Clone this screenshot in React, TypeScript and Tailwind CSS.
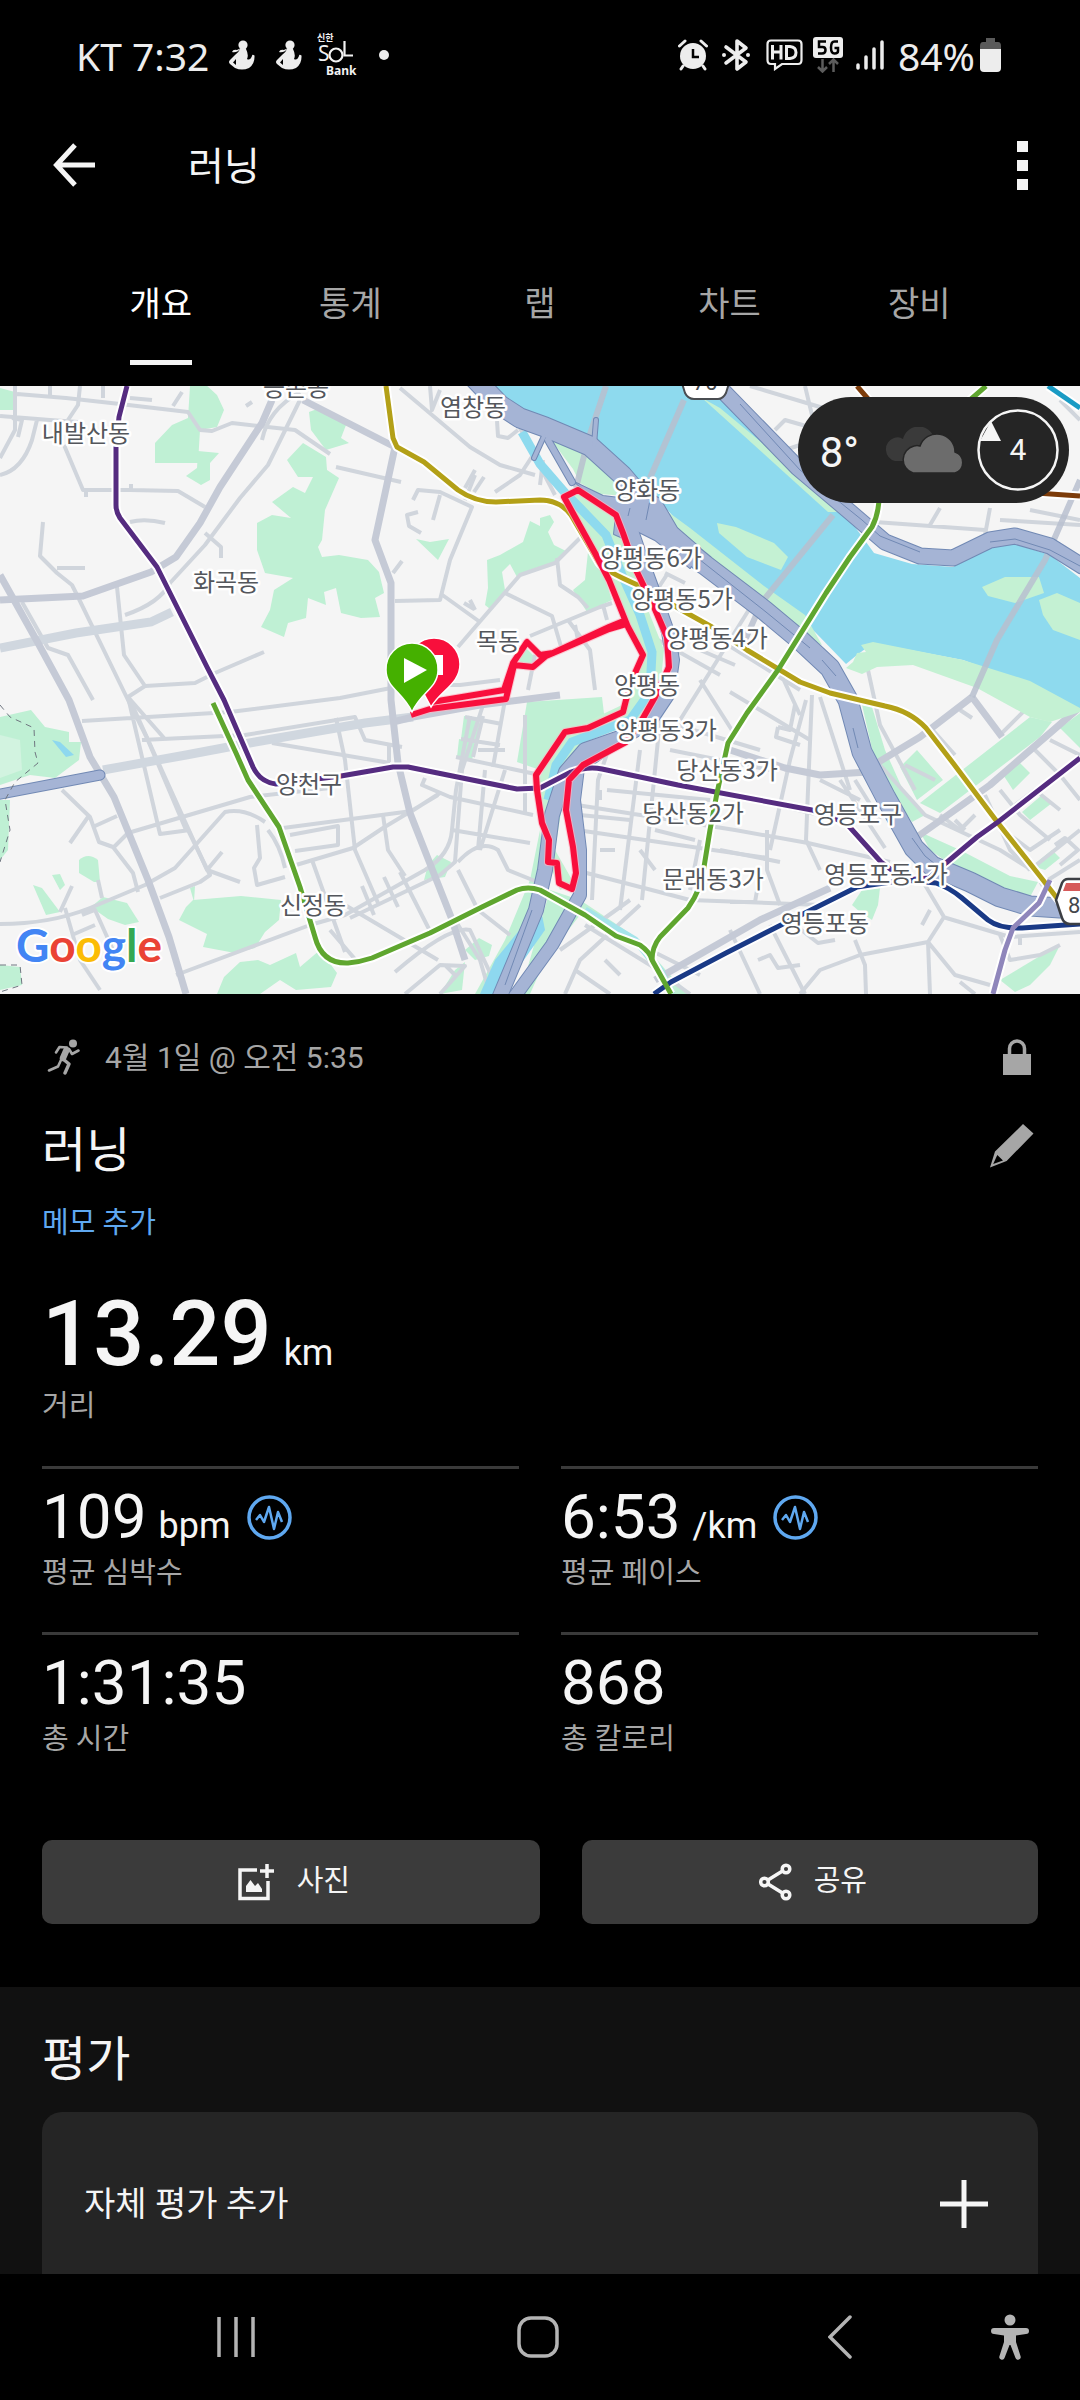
import type { ReactNode } from "react";

const MINOR_ROADS = [
  "M0 416 L50 420 L78 422 M15 386 L15 430 L0 458 M0 475 Q22 470 32 440 L37 420 M17 394 L66 398 L120 404 L188 412 L200 430 L212 431 L232 423 L295 430 L330 454",
  "M50 386 V396 M80 386 L78 405 L68 420 M103 386 V398 M12 418 L22 420 L18 437 M64 445 L83 490 H130 L178 491 L205 507 M86 490 V497 M131 484 V492 M130 398 L152 400 M182 392 L173 406 M252 402 L246 406",
  "M43 522 L40 556 L57 573 L72 585 L78 597 L128 700 L147 738 L186 830 M57 568 H85 M130 522 Q145 518 165 523 M117 587 L124 655 L145 686 L128 697 L164 738 M22 602 L48 648 L68 655 L93 700",
  "M145 686 L195 683 L215 673 L264 652 M125 615 Q160 603 170 583 L205 545 L240 498 L268 465 L300 400 M205 533 L221 547 V558 M262 440 Q268 410 300 392",
  "M82 721 L230 712 L340 698 L391 688 M142 740 L245 735 L355 717 L365 740 L402 747 M128 697 L160 834 L190 830 M130 700 L207 870 L240 882 M207 870 L222 852",
  "M62 790 L90 817 L99 842 L113 847 L133 873 L138 892 M88 817 L70 843 M95 826 L117 816 M114 847 L128 833 L250 797 L330 788 M188 830 L210 875 L200 882 L160 898",
  "M0 924 Q50 924 90 908 L145 885 L175 868 L225 812 Q245 808 265 822 M60 912 L72 886 M65 908 L80 960 L100 990 M82 915 L95 910 L113 950 M72 935 L95 925 M98 880 L102 898",
  "M176 975 L310 925 L345 915 L425 870 Q450 855 452 830 L456 790 L470 716 M283 828 L412 811 L440 793 M290 835 L338 826 V845 L295 851 M296 865 L353 848 L383 828 L438 795",
  "M336 718 L345 760 L355 850 L378 903 M257 825 L260 858 L254 868 L257 885 L285 877 M268 830 Q280 845 285 868 M312 860 L345 952 M383 815 L388 850 L405 876 M350 918 L440 875 L455 862 L462 770 L483 705",
  "M272 743 L390 763 M389 745 V762 M345 905 L438 960 M330 930 L360 965 M395 972 Q450 925 470 930 L500 994 M384 877 L398 907 M400 872 L432 935 M362 886 L374 915 M455 920 L480 960 L490 994",
  "M405 994 L440 965 L465 966 L440 994 M445 965 L455 975 M458 870 L478 910 L510 935 M458 862 Q480 838 498 850 L508 870 L540 883 M425 778 L422 785 L450 797 L533 815 M525 715 V815",
  "M456 757 L540 775 M461 739 L500 745 M465 717 L502 724 M483 716 L473 757 M505 700 L493 767 M478 750 L505 750 M485 770 L478 850 M505 770 L480 850 M452 830 L530 843",
  "M336 467 L401 482 M413 500 L418 490 L440 492 L472 507 L450 560 L440 600 L395 601 M440 495 L433 520 M475 475 L465 500 M484 477 L474 492 M418 512 L407 515 L409 526 L421 533 M402 561 L393 573",
  "M441 594 L480 622 M580 538 L555 563 L520 575 L470 633 L458 647 M464 603 L474 609 M505 593 L552 616 L562 650 M391 685 L460 685 L500 680 M470 600 L475 610 M497 421 L498 436 L508 438 L518 430",
  "M400 388 L470 447 L500 465 L535 475 M430 386 L432 410 L440 390 M495 492 L520 475 L533 455 M540 485 L543 460 M520 428 L555 495 M475 470 L465 488 M557 558 L560 585 L578 597 L588 608",
  "M530 636 L600 607 L612 603 M568 620 L590 650 L595 690 M603 605 L607 620 M535 655 L528 690 M575 625 L578 640 M640 630 L720 675",
  "M665 573 L685 583 M657 590 L668 573 M700 650 L735 665 M755 600 L680 720 M700 680 L735 735 M720 640 L800 690 M660 720 L760 750 M730 692 L810 740 M780 672 L800 715",
  "M806 700 L790 760 L770 850 M812 695 L808 790 L806 840 L820 870 M820 697 L850 790 M778 727 L790 730 L795 705 M778 727 L776 737 L800 745 M820 780 L860 800 M840 780 L885 848 M855 780 L880 820",
  "M670 750 L770 770 M665 780 L820 815 M610 745 L598 780 L592 900 M640 750 L620 910 M660 720 L642 900 M577 805 L735 830 L808 843 L890 862 M577 830 L768 858 M575 870 L690 900 L820 905",
  "M600 790 V800 M607 790 L710 800 M580 815 L630 820 M655 830 L695 840 M600 850 L615 850 M640 850 L655 870 M700 840 L690 890 M720 850 L780 862 M767 830 V870 L780 905 M730 902 H755 L758 885",
  "M585 925 L650 965 L690 994 M560 950 L630 900 M565 994 L580 960 L640 905 M575 970 L610 994 M620 975 L605 960 M730 930 L760 994 M770 925 L805 994 M650 950 L700 975 M795 925 L818 943 L835 940",
  "M758 960 L770 955 L778 968 L800 965 M800 994 L820 970 L860 955 L928 942 L944 917 L925 885 M855 940 L865 965 L866 994 M928 942 L930 994 M922 925 L930 910 M928 942 L955 975 L990 985 M1000 935 L1010 960 L1040 955 L1060 945 M943 917 L1010 937 L1080 932 M975 994 L960 982 M1020 935 V945",
  "M873 763 L880 765 L925 815 L1000 850 L1035 872 M868 670 L880 725 L915 790 M905 765 L935 780 M930 727 L955 755 M960 710 L972 718 M1000 735 L1030 705 M940 815 L960 830 L975 815 M955 820 L965 830 M985 795 L1010 850 L1030 870",
  "M1010 835 L1030 850 L1060 830 M1000 790 L1020 815 L1050 840 M1015 805 L1035 790 L1060 810 M1035 750 L1060 775 L1080 800 M1050 740 L1080 755 M1030 870 L1080 830 M1040 885 L1080 860 M1055 845 L1065 838 L1078 850 L1060 865",
  "M740 400 L785 450 L800 445 M775 430 L785 420 L820 430 M750 386 L830 410 M805 386 L818 440 M875 522 L985 530 M940 508 L930 525 M990 508 L985 535 M1000 520 L1080 525 M1030 510 L1080 520 M1060 400 L1080 420",
];

const MAJOR_ROADS = [
  "M0 600 L83 596 L151 572 L176 557 L200 523 L220 487 L262 423 L272 400 M303 400 L395 447 L375 540 L391 583 L391 700 L398 763 L410 813 L451 917 L465 960",
  "M0 575 L14 600 L38 643 L69 700 L90 757 L114 797 L148 880 L169 937 L186 994",
  "M393 722 L413 717 L480 705 L560 695",
  "M730 750 L785 768 L820 775 L868 772 M655 980 L760 920 L830 888",
  "M877 763 L920 737 L972 697 M972 697 L1002 737 M917 837 L990 785 L1080 707",
];

const LIGHT_ROADS = [
  "M0 648 L76 633 L151 622 L172 612",
  "M103 770 L186 755 L255 742 L365 723 L413 717",
];

const PARKS = [
  "M0 388 L15 392 V410 H0Z",
  "M190 386 L205 384 L217 395 L224 410 L217 427 L200 430 L198 463 H155 V443 L172 425 L188 418Z",
  "M198 451 L219 453 L210 463 V480 L201 485 L186 476 L197 468Z",
  "M309 412 L320 408 L346 425 L341 438 L349 443 L326 450 L311 430Z",
  "M303 443 L326 457 L327 470 L339 478 L325 510 L322 540 L318 547 L322 557 L339 555 L368 560 L379 572 L384 593 L375 598 L380 617 L361 618 L341 613 L336 588 L324 592 L326 605 L308 598 L306 618 L288 623 L284 637 L261 627 L270 610 L274 590 L293 578 L265 573 L257 550 V523 L272 515 L291 518 L272 502 L293 487 L305 493 L313 477 L298 477 L287 460Z",
  "M416 539 L430 542 L449 539 L438 560Z",
  "M530 521 L540 526 L540 518 L550 515 L554 522 L548 532 L554 545 L566 551 L560 560 L530 570 L517 577 L510 564 L502 572 L505 590 L490 609 L485 605 L488 588 L487 560 L500 555 L523 542Z",
  "M588 552 L598 558 L612 600 L587 612 L573 590 L585 580Z",
  "M0 717 L31 710 L45 727 L69 732 V742 L81 742 L79 760 L55 778 L30 775 L0 785Z",
  "M0 800 L10 800 L8 850 L0 860Z",
  "M79 860 Q88 852 98 860 L100 882 H94 L79 873Z",
  "M103 897 L127 903 L139 922 L125 925 L108 919 L91 907Z",
  "M33 885 L42 888 L60 912 L46 915Z M52 875 L60 874 L65 885 L60 890Z",
  "M193 900 L241 896 L281 900 L279 920 L265 932 L255 948 L235 953 L203 947 L207 934 L179 920 L186 907Z M190 888 L195 886 L194 902Z",
  "M217 994 L224 977 L240 962 L258 960 L270 965 L296 953 L300 967 L320 950 L337 973 L331 987 L296 990 L280 980 L260 994Z",
  "M464 716 L480 718 L477 741 L461 739Z M459 739 L475 742 L472 761 L457 757Z",
  "M527 702 L602 697 L605 722 L565 735 L540 770 L517 762Z",
  "M437 855 L451 862 L445 877 L424 880 L428 865Z",
  "M479 938 L492 945 L489 956 L475 960 L465 950Z",
  "M455 970 L465 962 L462 990 L440 994Z",
  "M540 830 L545 870 L540 905 L510 950 L490 994 H475 L505 940 L530 880Z",
  "M516 660 L526 648 L536 658 L530 666Z",
  "M0 965 L20 967 L22 985 L0 990Z",
  "M862 705 L872 707 L885 750 L903 790 L925 815 L912 822 L893 793 L873 753Z",
  "M920 832 L960 850 L1010 876 L1038 882 L1030 897 L1007 892 L957 869 L930 850Z",
  "M900 767 L917 750 L943 780 L917 800Z M920 803 L1030 717 L1052 722 L1040 737 L940 813Z",
  "M1002 773 L1020 763 L1030 773 L1013 790Z M1022 812 L1042 795 L1052 803 L1030 820Z M1032 866 L1052 850 L1060 858 L1045 870Z M1060 728 L1080 713 V748Z",
  "M1000 980 L1020 968 L1050 950 L1060 945 L1050 965 L1030 985 L1015 992Z",
  "M852 905 L862 890 L880 888 L878 905 L872 920 L860 912Z",
  "M550 890 L580 900 L640 940 L670 975 L690 994 H670 L640 950 L580 915 L545 960 L530 994 H520Z",
];

const HIGHWAYS = [
  { d: "M476 380 L500 405 L520 418 L545 427 L590 446 L622 475 L650 508 L672 538 L705 565 L764 610 L800 640 L830 668 L848 700 L862 752 L886 798 L914 848 L932 866 L970 882 L1000 897 L1030 906 L1060 908", w: 19 },
  { d: "M548 440 L572 482", w: 6 },
  { d: "M596 420 L594 445 M544 436 L534 458", w: 4 },
  { d: "M630 525 L642 560 L656 598 L668 632 L673 660 L668 695 L650 722 L600 752 L578 768 L574 800 L580 850 L580 895 L552 945 L515 996", w: 12 },
  { d: "M628 735 L585 750 L566 772 L552 815 L545 870 L536 910 L500 996", w: 14 },
  { d: "M722 390 L798 468 L850 512 L885 542 L920 556 L953 558 L990 540 L1015 536 L1050 546 L1082 566", w: 15 },
  { d: "M-5 795 L100 775", w: 9 },
];

const JUNCTION =
  "M576 483 L603 496 L628 499 L640 488 L660 499 L677 528 L700 548 L690 568 L655 540 L635 530 L632 542 L614 534 L616 516 L600 503Z";

const ROUTE =
  "M578 490 L564 497 L595 553 L609 580 L628 627 L643 655 L635 673 L626 700 L623 712 L588 728 L565 732 L536 775 L537 790 L542 823 L549 840 L548 862 L557 863 L559 883 L572 889 L576 873 L573 847 L566 810 L569 780 L583 765 L626 742 L643 718 L655 697 L669 667 L667 637 L654 607 L636 570 L623 533 L616 515 Z M626 620 L609 627 L553 653 L540 655 L527 642 L513 663 L504 690 L432 702 M626 624 L609 629 L546 656 L533 667 L514 665 L506 699 L430 709 L411 715";

const TRANSIT = [
  { d: "M857 386 L869 400 L900 440 M1000 490 L1036 493 L1080 496", c: "#7d3c0a" },
  { d: "M1048 386 L1080 408", c: "#1a9bc4" },
  { d: "M386 386 L393 438 L397 447 L424 462 L458 490 Q475 502 496 502 L540 500 Q560 500 571 515 L599 563 Q603 570 640 586 L685 612 L712 627 L747 650 L800 682 L830 693 L885 706 Q910 711 926 728 L953 763 L998 823 L1043 880 L1060 902", c: "#b3a017" },
  { d: "M127 386 L119 417 L116 447 V505 Q116 512 120 518 L157 567 L172 597 L207 667 L224 700 L253 767 Q260 782 276 784 L341 776 L393 767 H408 L517 789 L540 788 L571 772 Q588 766 602 769 L678 785 L812 810 L846 823 L881 862 L905 880 L929 878 L946 863 L977 837 L998 822 L1080 758", c: "#552c80" },
  { d: "M654 994 L671 982 L726 953 L781 925 L857 887 L905 880 L936 883 Q950 888 962 898 L988 920 Q1000 929 1022 928 L1080 924", c: "#1a3a86" },
  { d: "M1050 880 L1039 903 L1013 928 L1005 950 L993 994", c: "#8f86bb" },
  { d: "M213 703 L236 753 L248 780 L279 827 L300 887 L315 937 Q322 964 348 963 Q360 962 372 958 L430 933 L482 907 L517 890 Q528 886 540 890 L585 915 L616 936 L640 945 Q650 952 652 960 L671 994", c: "#5fa62f" },
  { d: "M986 386 L970 400 L879 490 Q880 512 872 527 L850 557 L826 593 L778 670 L747 713 L728 743 L717 793 L710 830 L704 867 Q702 888 688 908 L660 937 Q652 947 652 960", c: "#5fa62f" },
];

const LABELS: [string, number, number][] = [
  ["내발산동", 86, 433],
  ["등촌동", 296, 387],
  ["염창동", 473, 407],
  ["화곡동", 226, 582],
  ["목동", 498, 641],
  ["양화동", 647, 490],
  ["양평동6가", 651, 558],
  ["양평동5가", 682, 599],
  ["양평동4가", 717, 638],
  ["양평동", 647, 685],
  ["양평동3가", 666, 730],
  ["당산동3가", 727, 770],
  ["당산동2가", 693, 813],
  ["영등포구", 858, 814],
  ["영등포동1가", 886, 874],
  ["문래동3가", 713, 879],
  ["영등포동", 825, 923],
  ["양천구", 309, 784],
  ["신정동", 313, 905],
];

function RouteMap() {
  return (
    <svg viewBox="0 386 1080 608" className="block w-full" role="img" aria-label="러닝 경로 지도">
      <rect x="0" y="386" width="1080" height="608" fill="#f5f5f5" />
      <g fill="#bff0d4">
        {PARKS.map((d) => (
          <path key={d} d={d} />
        ))}
      </g>
      <path d="M0 735 L20 740 L22 770 L0 778Z" fill="#d2f3e0" />
      <g fill="none" stroke="#d0d5dc" strokeWidth="4" strokeLinejoin="round">
        {MINOR_ROADS.map((d) => (
          <path key={d} d={d} />
        ))}
      </g>
      <g fill="none" stroke="#d0d7df" strokeWidth="9">
        {LIGHT_ROADS.map((d) => (
          <path key={d} d={d} />
        ))}
      </g>
      <g fill="none" stroke="#c5cad6" strokeWidth="7" strokeLinejoin="round">
        {MAJOR_ROADS.map((d) => (
          <path key={d} d={d} />
        ))}
      </g>

      <path
        d="M490 386 L513 408 L540 418 L590 440 L627 474 L662 504 L690 535 L764 595 L815 632 L846 664 L857 655 L873 643 L963 660 L1030 685 L1080 712 V578 L1050 555 L1015 544 L990 548 L953 567 L912 564 L874 553 L850 520 L798 478 L722 396 L712 386Z"
        fill="#8edaee"
      />
      <path d="M52 740 L60 742 L74 755 L66 757Z" fill="#8ed8ef" />
      <g fill="#c4f1d3">
        <path d="M702 398 L720 408 L845 512 L828 512Z" />
        <path d="M552 441 L587 453 L613 473 L625 496 L600 494 L580 483 L573 469Z" />
        <path d="M532 416 L540 414 L544 422 L534 422Z" />
        <path d="M660 506 L690 528 L764 586 L805 615 L822 645 L800 636 L690 550Z" />
        <path d="M717 523 L736 527 L774 543 L788 557 L781 570 L747 557 L719 533Z" />
        <path d="M982 587 L1005 577 L1039 577 L1044 593 L1015 603 L988 596Z" />
        <path d="M1039 600 L1057 593 L1080 603 V640 L1053 630 L1043 615Z" />
        <path d="M853 662 L857 653 L866 652 L861 645 L873 642 L963 660 L1030 681 L1080 708 V712 L1050 722 L1030 717 L977 688 L913 665 L877 667 L862 674 L846 668Z" />
        <path d="M578 491 L612 512 L622 540 L640 590 L664 650 L660 690 L640 720 L590 740 L568 770 L555 850 L575 885 L560 890 L548 860 L538 780 L565 732 L622 705 L640 655 L600 560 L566 500Z" />
      </g>
      <g fill="none" stroke="#b9c0cf" strokeWidth="6" opacity=".85">
        <path d="M606 386 L588 440 L576 488" />
        <path d="M684 400 L650 478" />
        <path d="M833 515 L762 602 L745 640" />
        <path d="M1080 480 L1045 560 L997 640 L972 697" />
      </g>
      <path d="M522 432 L540 464 L566 494 L580 508 L606 535 L622 575 L640 615 L652 652 L650 692 L630 720 L572 742 L556 765 L548 800" fill="none" stroke="#8edaee" strokeWidth="9" />
      <path d="M585 910 L635 940 L660 970 L672 994" fill="none" stroke="#a5e4ea" strokeWidth="7" />
      <path d="M540 905 L495 960 L480 994 H500 L545 930Z" fill="#8ed8ef" />

      <g fill="none" strokeLinejoin="round" strokeLinecap="round">
        {HIGHWAYS.map((h) => (
          <path key={h.d} d={h.d} stroke="#7189b4" strokeWidth={h.w + 2} />
        ))}
        <path d={JUNCTION} stroke="#7189b4" strokeWidth="2" />
        {HIGHWAYS.map((h) => (
          <path key={h.d} d={h.d} stroke="#a5b4d5" strokeWidth={h.w} />
        ))}
      </g>
      <path d={JUNCTION} fill="#a5b4d5" />
      <g fill="none" stroke="#7189b4" strokeWidth="1">
        <path d="M650 500 L646 520 M630 508 L628 516" />
        <path d="M690 552 L766 612 L810 648" />
        <path d="M822 660 L836 676 M853 728 L858 748 M912 838 L925 856 L940 868" />
        <path d="M740 404 L800 470 L862 520 L880 536 L920 552" />
        <path d="M990 542 L1015 539 L1050 550 L1080 566" />
        <path d="M532 910 L505 985" />
      </g>
      <g fill="none" stroke="#6f7680" strokeWidth="1" strokeDasharray="6 5">
        <path d="M0 705 L10 717 L34 728 L35 752 L38 763 L15 782 L5 800 L10 830 L0 862" />
        <path d="M0 965 L20 965 L22 985 L0 992" />
      </g>

      <g fill="none" stroke="#ffffff" strokeWidth="9" strokeLinejoin="round">
        {TRANSIT.map((t) => (
          <path key={t.d} d={t.d} />
        ))}
      </g>
      <g fill="none" strokeWidth="5" strokeLinejoin="round">
        {TRANSIT.map((t) => (
          <path key={t.d} d={t.d} stroke={t.c} />
        ))}
      </g>

      <path d={ROUTE} fill="none" stroke="#ffb3c2" strokeWidth="8" strokeLinejoin="round" opacity=".7" />
      <path d={ROUTE} fill="none" stroke="#f80f3c" strokeWidth="6" strokeLinejoin="round" />

      <path d="M681 380 L685 393 Q688 399 694 399 H718 Q723 399 726 393 L730 380Z" fill="#fff" stroke="#4a4d52" strokeWidth="2" />
      <path d="M1090 879 H1068 Q1064 879 1062 883 L1056 900 L1062 918 Q1064 924 1070 924 H1090Z" fill="#fff" stroke="#3c3f44" strokeWidth="2.5" />
      <path d="M1066 883 H1082 V891 H1063Z" fill="#d65a5a" />

      <g
        className="font-['Noto_Sans_CJK_KR',sans-serif]"
        fontSize="24"
        fill="#54575c"
        stroke="#ffffff"
        strokeWidth="5"
        strokeLinejoin="round"
        paintOrder="stroke"
        textAnchor="middle"
      >
        {LABELS.map(([name, x, y]) => (
          <text key={name} x={x} y={y + 9}>
            {name}
          </text>
        ))}
      </g>
      <g className="font-['Roboto',sans-serif]" fontSize="22" fill="#44474c">
        <text x="693" y="390">70</text>
        <text x="1068" y="913">8</text>
      </g>

      <path d="M434 638 a26 26 0 0 1 26 26 C460 684 441 690 431 707 L408 664 a26 26 0 0 1 26 -26Z" fill="#f80f3c" stroke="#fff" strokeWidth="1.5" />
      <rect x="427" y="655" width="16" height="20" fill="#fff" />
      <path d="M412 643 a26 26 0 0 1 26 27 C438 688 421 692 412 712 C403 692 386 688 386 670 a26 26 0 0 1 26 -27Z" fill="#45b000" stroke="#fff" strokeWidth="1.5" />
      <path d="M404 658 L427 670 L404 683Z" fill="#fff" />

      <text
        x="16"
        y="962"
        className="font-['Lato',sans-serif]"
        fontSize="46"
        fontWeight="700"
        stroke="#ffffff"
        strokeWidth="4"
        strokeLinejoin="round"
        paintOrder="stroke"
      >
        <tspan fill="#4285f4">G</tspan>
        <tspan fill="#ea4335">o</tspan>
        <tspan fill="#fbbc05">o</tspan>
        <tspan fill="#4285f4">g</tspan>
        <tspan fill="#34a853">l</tspan>
        <tspan fill="#ea4335">e</tspan>
      </text>
    </svg>
  );
}

function WeatherBadge() {
  return (
    <div className="absolute top-[11px] right-[11px] flex h-[106px] items-center gap-[24px] rounded-full bg-[#252525] pr-[10px] pl-[22px]">
      <span className="mt-[6px] text-[42px] leading-none">8°</span>
      <svg width="82" height="46" viewBox="0 0 82 46" aria-hidden="true">
        <path d="M12 34 a12 12 0 0 1 -1 -23 a9 9 0 0 1 9 1 a16 16 0 0 1 31 -1 L30 34Z" fill="#3a3a3a" />
        <path
          d="M30 46 a14 14 0 0 1 1 -27 q3 -1 6 0 a18 18 0 0 1 35 6 a11 11 0 0 1 0 21Z"
          fill="#6c6c6c"
          stroke="#252525"
          strokeWidth="1.5"
        />
      </svg>
      <div className="relative -ml-[12px] flex size-[82px] items-center justify-center">
        <svg className="absolute inset-0" width="82" height="82" viewBox="0 0 82 82" aria-hidden="true">
          <circle cx="41" cy="41" r="39.5" fill="none" stroke="#f5f5f5" strokeWidth="2.5" />
          <path d="M14 12 L24 32 H3Z" fill="#f5f5f5" />
        </svg>
        <span className="text-[30px] leading-none">4</span>
      </div>
    </div>
  );
}

function WomanIcon() {
  return (
    <svg width="26" height="30" viewBox="0 0 26 30" fill="#ededed" aria-hidden="true">
      <circle cx="14" cy="5" r="4.6" />
      <path d="M12 8 L8 10 Q4 9 3 12 Q8 13 11 9Z" />
      <path d="M11 9 H17 Q20 15 18 19 Q21 21 23 16 Q23 14 25.500 15.500 Q26 24 20 28 Q13 31 6 28 L1 24 Q-1 22 1 20 L6 15 Q10 12 11 9Z" />
      <path d="M7 19 L4 22.500 L7 25Z" fill="#000" />
    </svg>
  );
}

function SolBankIcon() {
  return (
    <svg width="42" height="46" viewBox="0 0 42 46" fill="#f2f2f2" aria-hidden="true">
      <text x="0" y="9" fontSize="9" fontWeight="700" className="font-['Noto_Sans_CJK_KR',sans-serif]">
        신한
      </text>
      <text x="1" y="29" fontSize="21" className="font-['Noto_Sans',sans-serif]">
        S
      </text>
      <circle cx="19" cy="23" r="6.500" fill="none" stroke="#f2f2f2" strokeWidth="2.200" />
      <path d="M27.500 9 V23.500 H36" fill="none" stroke="#f2f2f2" strokeWidth="2.200" />
      <text x="9" y="43" fontSize="12" fontWeight="700" className="font-['Noto_Sans',sans-serif]">
        Bank
      </text>
    </svg>
  );
}

function StatusBar() {
  return (
    <div className="flex h-[110px] items-center pr-[79px] pl-[76px] font-['Noto_Sans','Noto_Sans_CJK_KR',sans-serif] text-[39px] leading-none text-[#ededed]">
      <span>KT 7:32</span>
      <div className="ml-[20px] flex items-center gap-[21px]">
        <WomanIcon />
        <WomanIcon />
      </div>
      <div className="ml-[15px]">
        <SolBankIcon />
      </div>
      <span className="ml-[20px] size-[10px] rounded-full bg-[#ededed]" />

      <div className="ml-auto flex items-center">
        <svg width="30" height="32" viewBox="0 0 30 32" fill="none" stroke="#ededed" aria-hidden="true">
          <circle cx="15" cy="17" r="13" fill="#ededed" stroke="none" />
          <path d="M1.500 7 L7 2 M28.500 7 L23 2" strokeWidth="3" strokeLinecap="round" />
          <path d="M5 27 L3 30 M25 27 L27 30" strokeWidth="3" strokeLinecap="round" />
          <path d="M15 10 V18 H21" stroke="#000" strokeWidth="2.500" />
        </svg>
        <svg className="ml-[14px]" width="28" height="34" viewBox="0 0 28 34" fill="none" stroke="#ededed" aria-hidden="true">
          <path d="M4 9 L24 24 L15 31 V3 L24 10 L4 25" strokeWidth="3.600" strokeLinejoin="round" strokeLinecap="round" />
          <circle cx="2" cy="17" r="2" fill="#ededed" stroke="none" />
          <circle cx="26" cy="17" r="2" fill="#ededed" stroke="none" />
        </svg>
        <svg className="ml-[16px]" width="37" height="32" viewBox="0 0 37 32" fill="none" stroke="#ededed" aria-hidden="true">
          <path d="M5 1.500 H32 Q35.500 1.500 35.500 5 V21 Q35.500 25 32 25 H16 L9 30 V25 H5 Q1.500 25 1.500 21 V5 Q1.500 1.500 5 1.500Z" strokeWidth="2.200" />
          <path d="M6.500 6 V20.500 M15 6 V20.500 M6.500 13 H15 M20.500 7.500 V19.500 H24 Q30 19 30 13.500 Q30 8 24 7.500Z" strokeWidth="3" />
        </svg>
        <svg className="ml-[10px]" width="30" height="36" viewBox="0 0 30 36" fill="none" aria-hidden="true">
          <rect width="30" height="21" rx="3" fill="#ededed" />
          <path d="M13 4.500 H6 V10 H9.500 Q12.500 10 12.500 13 Q12.500 16.500 9 16.500 H5 M25 4.500 H21.500 Q18 4.500 18 10.500 Q18 16.500 21.500 16.500 Q25 16.500 25 14 V11 H21.500" stroke="#000" strokeWidth="2.500" />
          <path d="M9.500 22 V34 M5 30 L9.500 34.500 L14 30 M20.500 35 V23 M16 27 L20.500 22.500 L25 27" stroke="#5c5c5c" strokeWidth="2.500" />
        </svg>
        <svg className="ml-[13px]" width="29" height="30" viewBox="0 0 29 30" stroke="#ededed" strokeWidth="3.500" strokeLinecap="round" aria-hidden="true">
          <path d="M2 25 V28 M10 17 V28 M18 9 V28 M26 2 V28" />
        </svg>
        <span className="ml-[13px]">84%</span>
        <svg className="ml-[5px]" width="21" height="34" viewBox="0 0 21 34" aria-hidden="true">
          <path d="M6 0 H15 V4 H18 Q21 4 21 8 V13 H0 V8 Q0 4 3 4 H6Z" fill="#5a5a5a" />
          <path d="M0 11 H21 V30 Q21 34 17 34 H4 Q0 34 0 30Z" fill="#ededed" />
        </svg>
      </div>
    </div>
  );
}

function PulseIcon() {
  return (
    <svg className="ml-[4px] self-center" width="45" height="45" viewBox="0 0 45 45" fill="none" stroke="#5fa8f0" aria-hidden="true">
      <circle cx="22.500" cy="22.500" r="20.500" strokeWidth="3.500" />
      <path d="M9 25 L13 20 L17 27 L22 12 L27 34 L31 17 L35 27" strokeWidth="2.500" strokeLinejoin="round" />
    </svg>
  );
}

function Stat({ value, unit, label, pulse }: { value: string; unit?: string; label: string; pulse?: boolean }) {
  return (
    <div className="border-t-[3px] border-[#3a3a3a] pt-[16px] pb-[39px]">
      <div className="flex items-baseline gap-[12px]">
        <span className="text-[62px] leading-[64px]">{value}</span>
        {unit && <span className="text-[36px] leading-[40px]">{unit}</span>}
        {pulse && <PulseIcon />}
      </div>
      <p className="mt-[4px] text-[29px] leading-[40px] text-[#a6a6a6]">{label}</p>
    </div>
  );
}

function ActionButton({ icon, children }: { icon: ReactNode; children: ReactNode }) {
  return (
    <button
      type="button"
      className="flex h-[84px] items-center justify-center gap-[22px] rounded-[10px] bg-[#3b3b3b] pl-[6px] text-[29px]"
    >
      {icon}
      {children}
    </button>
  );
}

const TABS = ["개요", "통계", "랩", "차트", "장비"];

export default function App() {
  return (
    <div className="flex min-h-screen flex-col bg-black font-['Roboto','Noto_Sans_CJK_KR',sans-serif] text-[#f5f5f5]">
      <StatusBar />

      <header className="flex h-[110px] items-center pr-[52px] pl-[52px]">
        <button type="button" aria-label="뒤로">
          <svg width="44" height="44" viewBox="0 0 44 44" fill="none" stroke="#f5f5f5" strokeWidth="5" aria-hidden="true">
            <path d="M43 22 H4 M23 2 L4.500 22 L23 42" />
          </svg>
        </button>
        <h1 className="mt-[4px] ml-[92px] text-[39px] leading-[48px]">러닝</h1>
        <button type="button" aria-label="더보기" className="ml-auto flex flex-col gap-2">
          <span className="size-[11px] bg-[#f5f5f5]" />
          <span className="size-[11px] bg-[#f5f5f5]" />
          <span className="size-[11px] bg-[#f5f5f5]" />
        </button>
      </header>

      <nav className="grid h-[166px] grid-cols-5 items-end justify-items-center px-[66px] pb-[21px]">
        {TABS.map((tab, i) => (
          <button
            key={tab}
            type="button"
            className={
              i === 0
                ? "border-b-[5px] border-[#f5f5f5] pb-[32px] text-[34px] leading-[48px] text-white"
                : "border-b-[5px] border-transparent pb-[32px] text-[34px] leading-[48px] text-[#a6a6a6]"
            }
          >
            {tab}
          </button>
        ))}
      </nav>

      <div className="relative">
        <RouteMap />
        <WeatherBadge />
      </div>

      <main className="px-[42px] pt-[39px] pb-[63px]">
        <div className="flex h-[48px] items-center text-[#a6a6a6]">
          <svg className="ml-[5px]" width="36" height="36" viewBox="0 0 36 36" fill="none" stroke="#a6a6a6" strokeLinecap="round" strokeLinejoin="round" aria-hidden="true">
            <circle cx="26" cy="4.500" r="4" fill="#a6a6a6" stroke="none" />
            <path d="M19.500 11 L16 19" strokeWidth="6.500" />
            <path d="M20 8.500 L12.500 8 L9 13.500" strokeWidth="2.600" />
            <path d="M22 10 L25 15 L31.500 11.500" strokeWidth="2.600" />
            <path d="M16 20 L22 25 L18 34" strokeWidth="3.400" />
            <path d="M14 21 L11 27.500 L2 31.500" strokeWidth="2.600" />
          </svg>
          <span className="ml-[22px] text-[30px]">4월 1일 @ 오전 5:35</span>
          <svg className="mr-[7px] ml-auto" width="28" height="36" viewBox="0 0 28 36" aria-hidden="true">
            <rect y="15" width="28" height="21" fill="#a6a6a6" />
            <path d="M6.500 16 V9.500 a7.500 7.500 0 0 1 15 0 V16" fill="none" stroke="#a6a6a6" strokeWidth="3.500" />
          </svg>
        </div>

        <div className="mt-[38px] flex h-[64px] items-center justify-between">
          <h2 className="text-[48px] leading-[64px]">러닝</h2>
          <button type="button" aria-label="제목 편집" className="mr-[4px] mb-[10px]">
            <svg width="44" height="44" viewBox="0 0 44 44" fill="#a6a6a6" fillRule="evenodd" aria-hidden="true">
              <path d="M33 0 L43.500 9.500 L16.600 37 L0 43.500 L5 27.500Z M7.300 31 L3.200 40 L13 36.500Z" />
            </svg>
          </button>
        </div>

        <a href="#memo" className="mt-[20px] block w-fit text-[29px] leading-[40px] text-[#5fa8f0]">
          메모 추가
        </a>

        <div className="mt-[48px] flex items-baseline gap-[12px]">
          <span className="text-[90px] leading-[88px] font-medium">13.29</span>
          <span className="text-[36px] leading-[40px]">km</span>
        </div>
        <p className="mt-[7px] text-[29px] leading-[40px] text-[#a6a6a6]">거리</p>

        <div className="mt-[40px] grid grid-cols-2 gap-x-[42px]">
          <Stat value="109" unit="bpm" label="평균 심박수" pulse />
          <Stat value="6:53" unit="/km" label="평균 페이스" pulse />
          <Stat value="1:31:35" label="총 시간" />
          <Stat value="868" label="총 칼로리" />
        </div>

        <div className="mt-[42px] grid grid-cols-[12fr_11fr] gap-[42px]">
          <ActionButton
            icon={
              <svg width="37" height="38" viewBox="0 0 37 38" fill="none" stroke="#f5f5f5" strokeWidth="3.500" aria-hidden="true">
                <path d="M19 7 H2 V35.500 H30 V18" />
                <path d="M29 1 V15 M22 8 H36" />
                <path d="M8 29 V23 L12.500 17 L17 23 L20 20 L24 26 V29Z" fill="#f5f5f5" stroke="none" />
              </svg>
            }
          >
            사진
          </ActionButton>
          <ActionButton
            icon={
              <svg width="33" height="38" viewBox="0 0 33 38" fill="none" stroke="#f5f5f5" strokeWidth="3.500" aria-hidden="true">
                <circle cx="5.500" cy="19" r="3.800" />
                <circle cx="27" cy="6" r="3.800" />
                <circle cx="27" cy="32" r="3.800" />
                <path d="M9 17 L23.500 8 M9 21 L23.500 30" />
              </svg>
            }
          >
            공유
          </ActionButton>
        </div>
      </main>

      <section className="flex flex-1 flex-col bg-[#111111] px-[42px] pt-[41px]">
        <h2 className="text-[48px] leading-[64px]">평가</h2>
        <div className="mt-[20px] flex-1 rounded-t-[20px] bg-[#252525] px-[42px] pt-[68px]">
          <button type="button" className="flex w-full items-center justify-between text-[34px] leading-[48px]">
            자체 평가 추가
            <svg className="mr-[8px]" width="48" height="48" viewBox="0 0 48 48" stroke="#f5f5f5" strokeWidth="5" aria-hidden="true">
              <path d="M24 0 V48 M0 24 H48" />
            </svg>
          </button>
        </div>
      </section>

      <footer className="flex h-[126px] items-center pr-[51px] pl-[85px]">
        <button type="button" aria-label="최근 앱" className="flex flex-1 justify-center">
          <svg width="40" height="42" viewBox="0 0 40 42" stroke="#b4b4b4" strokeWidth="3.500" aria-hidden="true">
            <path d="M3 1 V41 M20 1 V41 M37 1 V41" />
          </svg>
        </button>
        <button type="button" aria-label="홈" className="flex flex-1 justify-center">
          <svg width="42" height="42" viewBox="0 0 42 42" fill="none" stroke="#b4b4b4" strokeWidth="3.500" aria-hidden="true">
            <rect x="2" y="2" width="38" height="38" rx="12" />
          </svg>
        </button>
        <button type="button" aria-label="뒤로 가기" className="flex flex-1 justify-center">
          <svg width="24" height="44" viewBox="0 0 24 44" fill="none" stroke="#b4b4b4" strokeWidth="3.500" strokeLinecap="round" aria-hidden="true">
            <path d="M22 2 L2 22 L22 42" />
          </svg>
        </button>
        <button type="button" aria-label="접근성" className="flex w-[38px] justify-center">
          <svg width="38" height="46" viewBox="0 0 38 46" fill="#b4b4b4" aria-hidden="true">
            <circle cx="19" cy="6" r="5.500" />
            <path d="M3 14 H35 a3 3 0 0 1 0 6 L25 21.500 V28 L29.500 42 a2.500 2.500 0 0 1 -5 2 L19.500 31 H18.500 L13.500 44 a2.500 2.500 0 0 1 -5 -2 L13 28 V21.500 L3 20 a3 3 0 0 1 0 -6Z" />
          </svg>
        </button>
      </footer>
    </div>
  );
}
